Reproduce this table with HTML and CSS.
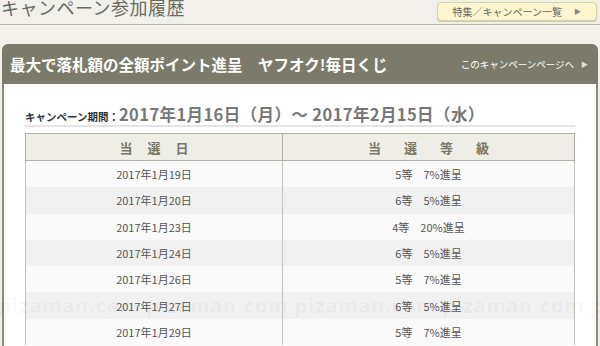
FILE: index.html
```html
<!DOCTYPE html>
<html lang="ja">
<head>
<meta charset="utf-8">
<title>キャンペーン参加履歴</title>
<link rel="stylesheet" href="styles.css">
</head>
<body>
<div class="top">
  <h1 class="page-title">キャンペーン参加履歴</h1>
  <a class="list-btn" href="#">特集／キャンペーン一覧<span class="tri">▶</span></a>
</div>
<div class="panel">
  <div class="panel-head">
    <h2 class="panel-title">最大で落札額の全額ポイント進呈　ヤフオク!毎日くじ</h2>
    <a class="panel-link" href="#">このキャンペーンページへ<span class="tri">▶</span></a>
  </div>
  <div class="panel-body">
    <div class="period"><span class="period-label">キャンペーン期間：</span><span class="period-date">2017年1月16日（月）～ 2017年2月15日（水）</span></div>
    <table class="result">
      <thead>
        <tr><th class="th-date">当 選 日</th><th class="th-rank">当 選 等 級</th></tr>
      </thead>
      <tbody>
        <tr><td>2017年1月19日</td><td>5等　7%進呈</td></tr>
        <tr><td>2017年1月20日</td><td>6等　5%進呈</td></tr>
        <tr><td>2017年1月23日</td><td>4等　20%進呈</td></tr>
        <tr><td>2017年1月24日</td><td>6等　5%進呈</td></tr>
        <tr><td>2017年1月26日</td><td>5等　7%進呈</td></tr>
        <tr><td>2017年1月27日</td><td>6等　5%進呈</td></tr>
        <tr><td>2017年1月29日</td><td>5等　7%進呈</td></tr>
      </tbody>
    </table>
  </div>
</div>
<div class="watermark">pizaman.com pizaman.com pizaman.com pizaman.com p</div>
</body>
</html>
```
FILE: styles.css
```css
html, body {
  margin: 0;
  padding: 0;
}
body {
  background: #f1f0ea;
  font-family: "Noto Sans CJK JP", "Noto Sans", sans-serif;
  color: #555;
  width: 600px;
  height: 346px;
  overflow: hidden;
  position: relative;
}
.top {
  height: 24px;
  border-bottom: 1px solid #b4b3aa;
  display: flex;
  justify-content: space-between;
  align-items: flex-start;
  overflow: hidden;
}
.page-title {
  margin: -6px 0 0 1px;
  font-size: 18px;
  font-weight: normal;
  line-height: 26px;
  color: #6a6a62;
  letter-spacing: 0.5px;
}
.list-btn {
  margin: 2px 3px 0 0;
  width: 158px;
  height: 17px;
  border: 1px solid #d9cf9f;
  border-radius: 4px;
  background: #fdf6cf;
  box-shadow: 0 1px 1px #cfc9a8;
  color: #666;
  text-decoration: none;
  font-size: 10px;
  line-height: 17px;
  display: flex;
  justify-content: flex-end;
  align-items: center;
}
.list-btn .tri {
  font-size: 7px;
  color: #888;
  margin: 0 15px 0 12px;
}
.panel {
  margin: 19px 2px 0 2px;
}
.panel-head {
  height: 40px;
  background: #7c7b6b;
  border-radius: 6px 6px 0 0;
  display: flex;
  justify-content: space-between;
  align-items: center;
  padding: 0 10px 0 8px;
}
.panel-title {
  margin: 0;
  font-size: 15.5px;
  font-weight: bold;
  color: #fff;
  line-height: 20px;
}
.panel-link {
  color: #fff;
  text-decoration: none;
  font-size: 9.5px;
  display: flex;
  align-items: center;
}
.panel-link .tri {
  font-size: 7px;
  color: #ddd;
  margin-left: 7px;
}
.panel-body {
  background: #fff;
  border-left: 2px solid #8a8978;
  border-right: 2px solid #8a8978;
  padding: 20px 21px 0 21px;
  height: 300px;
}
.period {
  display: flex;
  align-items: baseline;
  height: 21px;
  line-height: 21px;
  border-bottom: 2px solid #e4e4e4;
}
.period-label {
  font-size: 10.5px;
  font-weight: bold;
  color: #333;
}
.period-date {
  font-size: 16.5px;
  font-weight: bold;
  color: #777;
  letter-spacing: 0.4px;
}
.result {
  margin-top: 6px;
  width: 100%;
  border-collapse: collapse;
  font-size: 11px;
  table-layout: fixed;
}
.result th {
  height: 26px;
  background: #efeee6;
  border: 1px solid #b2b1a6;
  color: #777766;
  font-size: 13px;
  font-weight: bold;
  text-align: center;
  padding: 0;
}
.result .th-date {
  width: 250px;
  letter-spacing: 6px;
  padding-left: 6px;
}
.result .th-rank {
  letter-spacing: 10px;
  padding-left: 10px;
}
.result td {
  height: 26.3px;
  padding: 0;
  text-align: center;
  color: #555;
  border-left: 1px solid #c4c3b9;
  border-right: 1px solid #c4c3b9;
}
.result tbody tr:nth-child(odd) td {
  background: #fafafa;
}
.result tbody tr:nth-child(even) td {
  background: #f1f1f1;
}
.watermark {
  position: absolute;
  left: -2px;
  top: 295px;
  white-space: nowrap;
  font-family: "DejaVu Sans", sans-serif;
  font-weight: bold;
  font-size: 19px;
  color: rgba(0, 0, 0, 0.03);
  pointer-events: none;
}
```
